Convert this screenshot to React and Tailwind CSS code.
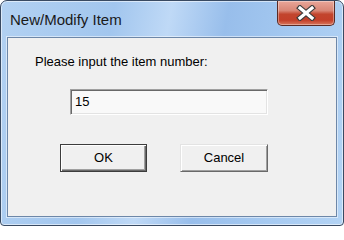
import React from 'react';

const font = { fontFamily: '"Liberation Sans", Arial, sans-serif' };

const CloseButton = () => (
  <div className="mr-[8px] w-[58px] h-[25px] rounded-b-[5px] border border-t-0 border-[#5a2a24] bg-[linear-gradient(to_bottom,#e8a699_0%,#d88676_40%,#c2452e_55%,#c3402a_80%,#d8775d_100%)] shadow-[inset_0_0_0_1px_rgba(255,255,255,0.35)] flex items-center justify-center">
    <svg width="22" height="16" viewBox="0 0 22 16">
      <path d="M5 3 L17 13 M17 3 L5 13" stroke="#3b3b3b" strokeWidth="5.5" strokeLinecap="square" />
      <path d="M5 3 L17 13 M17 3 L5 13" stroke="#ffffff" strokeWidth="3.2" strokeLinecap="square" />
    </svg>
  </div>
);

const App = () => {
  return (
    <div className="w-[344px] h-[226px] bg-white" style={font}>
      {/* Window frame */}
      <div className="w-full h-full flex flex-col rounded-t-[7px] rounded-b-[4px] border border-[#394a62] bg-[linear-gradient(100deg,#b2d1f2_0%,#a2c6ee_30%,#bfd9f6_45%,#98beeb_60%,#a6caf1_80%,#b3d3f4_100%)] shadow-[inset_0_0_0_1px_rgba(255,255,255,0.55)] overflow-hidden">
        {/* Title bar */}
        <div className="h-[36px] flex justify-between items-start">
          <div className="pl-[9px] pt-[10px] text-[15px] leading-[18px] text-[#1a1a1a]">New/Modify Item</div>
          <CloseButton />
        </div>

        {/* Client area */}
        <div className="mx-[6px] mb-[8px] flex-1 border border-[#6d87a8] bg-[#f0f0f0] shadow-[0_0_0_1px_rgba(255,255,255,0.5)] flex flex-col text-[13px] text-black">
          <div className="pl-[27px] pt-[16px] leading-[16px]">Please input the item number:</div>

          <div className="pl-[62px] pt-[19px]">
            <div className="w-[198px] h-[26px] bg-[#f9f9f9] border border-t-[#a0a0a0] border-l-[#a0a0a0] border-b-white border-r-white shadow-[inset_1px_1px_0_#696969,inset_-1px_-1px_0_#e3e3e3] flex items-center pl-[4px]">
              15
            </div>
          </div>

          <div className="pl-[52px] pt-[29px] flex gap-[33px]">
            <div className="w-[87px] h-[28px] border border-[#3c3c3c] bg-[#f0f0f0] shadow-[inset_1px_1px_0_#ffffff,inset_-1px_-1px_0_#696969,inset_-2px_-2px_0_#a0a0a0] flex items-center justify-center">
              OK
            </div>
            <div className="w-[88px] h-[28px] border border-t-[#e3e3e3] border-l-[#e3e3e3] border-b-[#696969] border-r-[#696969] bg-[#f0f0f0] shadow-[inset_1px_1px_0_#ffffff,inset_-1px_-1px_0_#a0a0a0] flex items-center justify-center">
              Cancel
            </div>
          </div>
        </div>
      </div>
    </div>
  );
};

export default App;
